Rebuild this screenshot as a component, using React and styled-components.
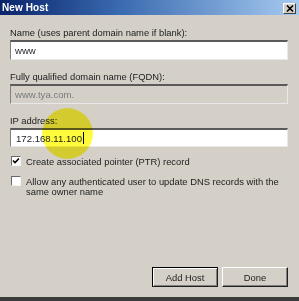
import React from "react";
import styled, { createGlobalStyle } from "styled-components";

const GlobalStyle = createGlobalStyle`
  html, body {
    margin: 0;
    padding: 0;
    background: #d4d0c8;
  }
  body {
    font-family: "Liberation Sans", Arial, sans-serif;
    font-size: 9.4px;
  }
`;

const Window = styled.div`
  position: relative;
  width: 299px;
  height: 301px;
  box-sizing: border-box;
  display: flex;
  flex-direction: column;
  background: #d4d0c8;
  border-bottom: 4px solid #3c3c3c;
  overflow: hidden;
`;

const TitleBar = styled.div`
  height: 15px;
  flex: none;
  display: flex;
  align-items: center;
  justify-content: space-between;
  padding: 0 3px 0 2px;
  background: linear-gradient(to right, #0a246a 0%, #3a6ab0 40%, #a6caf0 100%);
`;

const Title = styled.span`
  color: #fff;
  font-weight: bold;
  font-size: 10px;
  letter-spacing: 0.1px;
`;

const CloseButton = styled.div`
  width: 13px;
  height: 11px;
  box-sizing: border-box;
  margin-top: 1px;
  background: #d4d0c8;
  border-top: 1px solid #fff;
  border-left: 1px solid #fff;
  border-right: 1px solid #404040;
  border-bottom: 1px solid #404040;
  display: flex;
  align-items: center;
  justify-content: center;
`;

const Body = styled.div`
  flex: 1;
  display: flex;
  flex-direction: column;
  padding: 12px 11px 0 10px;
`;

const Label = styled.div`
  line-height: 12px;
  height: 12px;
  color: #1c1c1c;
  margin-top: ${p => (p.$first ? 0 : 11)}px;
  white-space: nowrap;
`;

const Field = styled.div`
  position: relative;
  margin-top: 1px;
  height: ${p => p.$h || 20}px;
  box-sizing: border-box;
  display: flex;
  align-items: center;
  padding-left: ${p => p.$pad || 4}px;
  background: ${p => (p.$disabled ? "#d4d0c8" : "#fff")};
  color: ${p => (p.$disabled ? "#7a7a7a" : "#1e1e28")};
  border-top: 2px solid #5a5a5a;
  border-left: 1px solid #808080;
  border-right: 1px solid #e8e8e8;
  border-bottom: 1px solid #e8e8e8;
  font-size: 9.6px;
`;

const Caret = styled.span`
  display: inline-block;
  width: 1px;
  height: 12px;
  background: #000;
  margin-left: 1px;
`;

const CheckRow = styled.div`
  display: flex;
  align-items: flex-start;
  gap: 5px;
  margin-top: ${p => p.$mt}px;
  padding-left: 1px;
`;

const Box = styled.div`
  flex: none;
  width: 10px;
  height: 10px;
  box-sizing: border-box;
  background: #fff;
  border-top: 1px solid #6a6a6a;
  border-left: 1px solid #6a6a6a;
  border-right: 1px solid #f4f4f4;
  border-bottom: 1px solid #f4f4f4;
  display: flex;
  align-items: center;
  justify-content: center;
`;

const CheckText = styled.div`
  line-height: 10px;
  color: #1c1c1c;
  margin-top: 1px;
  white-space: nowrap;
`;

const ButtonBar = styled.div`
  margin-top: auto;
  margin-bottom: 10px;
  display: flex;
  justify-content: flex-end;
  gap: 4px;
`;

const Button = styled.div`
  width: 66px;
  height: 20px;
  box-sizing: border-box;
  display: flex;
  align-items: center;
  justify-content: center;
  color: #1c1c1c;
  background: #d4d0c8;
  border: 1px solid ${p => (p.$default ? "#000" : "#fff")};
  border-right-color: #202020;
  border-bottom-color: #202020;
  box-shadow: ${p =>
    p.$default
      ? "inset 1px 1px 0 #fff, inset -1px -1px 0 #808080"
      : "inset -1px -1px 0 #808080"};
`;

const Highlight = styled.div`
  position: absolute;
  left: 42px;
  top: 108px;
  width: 51px;
  height: 51px;
  border-radius: 50%;
  background: radial-gradient(
    circle,
    rgb(255, 250, 60) 0%,
    rgb(255, 250, 60) 66%,
    rgb(255, 252, 160) 86%,
    rgb(255, 255, 255) 100%
  );
  mix-blend-mode: multiply;
  pointer-events: none;
`;

const Check = () => (
  <svg width="8" height="8" viewBox="0 0 8 8">
    <path d="M1 3.5 L3 5.5 L7 1.5" fill="none" stroke="#000" strokeWidth="1.6" />
  </svg>
);

const App = () => {
  return (
    <>
      <GlobalStyle />
      <Window>
        <TitleBar>
          <Title>New Host</Title>
          <CloseButton>
            <svg width="8" height="7" viewBox="0 0 8 7">
              <path d="M1 0.5 L7 6.5 M7 0.5 L1 6.5" stroke="#000" strokeWidth="1.6" />
            </svg>
          </CloseButton>
        </TitleBar>
        <Body>
          <Label $first>Name (uses parent domain name if blank):</Label>
          <Field>www</Field>
          <Label>Fully qualified domain name (FQDN):</Label>
          <Field $disabled>www.tya.com.</Field>
          <Label>IP address:</Label>
          <Field $h={19} $pad={5}>
            172.168.11.100
            <Caret />
          </Field>
          <CheckRow $mt={9}>
            <Box>
              <Check />
            </Box>
            <CheckText>Create associated pointer (PTR) record</CheckText>
          </CheckRow>
          <CheckRow $mt={9}>
            <Box />
            <CheckText>
              Allow any authenticated user to update DNS records with the
              <br />
              same owner name
            </CheckText>
          </CheckRow>
          <ButtonBar>
            <Button $default>Add Host</Button>
            <Button>Done</Button>
          </ButtonBar>
        </Body>
        <Highlight />
      </Window>
    </>
  );
};

export default App;
